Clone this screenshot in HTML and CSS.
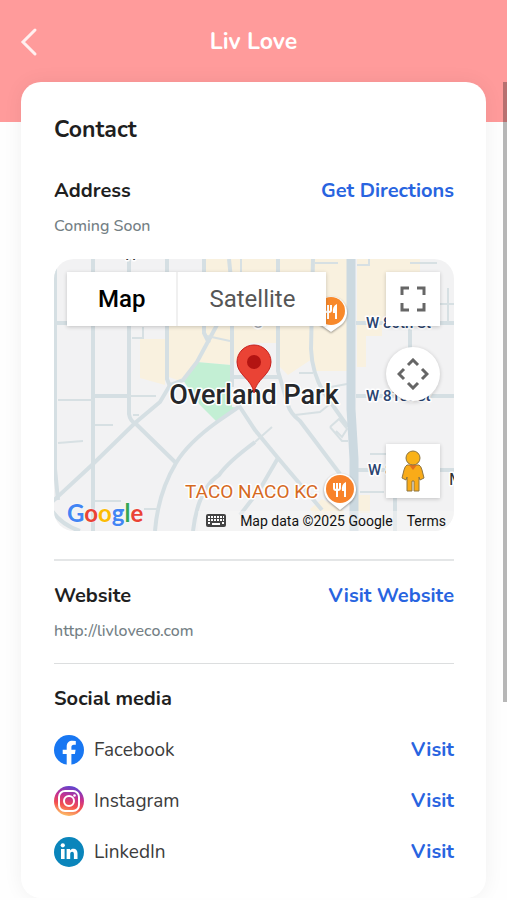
FILE: index.html
```html
<!DOCTYPE html>
<html lang="en">
<head>
  <meta charset="UTF-8" />
  <meta name="viewport" content="width=device-width, initial-scale=1.0" />
  <title>Liv Love</title>
  <link rel="stylesheet" href="styles.css">
</head>
<body>
  <header class="header">
    <button class="back" aria-label="Back">
      <svg width="18" height="30" viewBox="0 0 18 30"><path d="M15 3 L3 15 L15 27" /></svg>
    </button>
    <h1>Liv Love</h1>
  </header>

  <main class="card">
    <h2>Contact</h2>

    <section class="address">
      <div class="row">
        <h3>Address</h3>
        <a href="#">Get Directions</a>
      </div>
      <p>Coming Soon</p>

      <div class="map">
        <svg class="map-tiles" viewBox="0 0 400 272" preserveAspectRatio="xMidYMid slice">
          <rect width="400" height="272" fill="#f2f2f3" />

          <!-- commercial areas and park -->
          <g fill="#f9f1df">
            <path d="M151 0 H293 V112 L262 112 L258 100 L234 116 L224 106 L222 84 L196 84 L178 106 L143 103 L126 122 L115 118 L113 64 L151 64 Z" />
            <path d="M86 80 H111 V126 L86 119 Z" />
            <path d="M303 0 H366 V63 H328 V77 H312 V108 H303 Z" />
            <path d="M256 250 L268 240 L290 252 V261 H262 Z M303 236 H316 V254 H303 Z" />
          </g>
          <path d="M143 103 L177 106 L178 148 L186 149 L163 163 L146 146 L129 121 Z" fill="#c3efd4" />

          <!-- streets -->
          <g fill="none" stroke="#d5dfe3" stroke-width="4">
            <path d="M1 0 V210 L4 241" />
            <path d="M39 0 V272" />
            <path d="M75 0 V155 Q76 162 82 165 L122 204" />
            <path d="M113 0 V120 L118 132" />
            <path d="M-2 243 L39 205 L81 164 L106 143 L116 126 L129 121 L143 103 L164 64" />
            <path d="M150 0 V74 L155 84" />
            <path d="M175 0 L178 30 V128" />
            <path d="M101 272 Q104 234 122 204 Q134 184 163 163 L186 147" />
            <path d="M139 272 Q144 230 165 216 Q174 203 201 183" />
            <path d="M182 142 L201 171 L224 199 L268 251" />
            <path d="M224 0 V112 L234 146 Q236 154 246 162 L286 215" />
            <path d="M259 0 L257 90 Q258 114 270 134 L294 168" />
            <path d="M224 199 L206 230 L186 256" />
            <path d="M302 64 H400 M302 137 H400 M302 211 H400" />
            <path d="M356 64 V95 M341 211 V272" />
            <path d="M39 137 H75 M0 64 H15 M178 118 H226" />
            <path d="M-2 252 Q8 266 26 272" />
          </g>
          <g fill="none" stroke="#d7e0e3" stroke-width="2">
            <path d="M4 141 H39 M75 137 H102 M41 166 H59 M4 184 L29 182 M79 156 H85 M41 242 H67 M90 250 H105" />
            <path d="M78 79 H89 V68 M153 77 L176 82 M187 0 V14" />
            <path d="M201 183 L218 168 M241 156 L266 153 L276 145" />
            <path d="M276 168 L285 160 L293 170 L288 178 L282 172 M276 168 L288 182 H294" />
            <path d="M261 4 H284 M303 6 H315 V0 M356 4 H383 M394 29 V63 M385 45 H400" />
            <path d="M245 114 H259 M266 130 L293 125" />
            <path d="M316 195 H332 M306 233 H330" />
          </g>
          <path d="M297 0 V150 L300 200 V272" fill="none" stroke="#ccd9e0" stroke-width="9" />

          <!-- restaurants -->
          <g class="poi">
            <path d="M277 73 L267 66 A16 16 0 1 1 287 66 Z" fill="#fff" />
            <circle cx="277" cy="52" r="14" fill="#f8892b" />
            <path d="M271 46 V51 Q271 53 273 53 H275 Q277 53 277 51 V46 M274 46 V60" fill="none" stroke="#fff" stroke-width="2" />
            <path d="M283 45 V60 H281 V54 H279 Q278 47 283 45 Z" fill="#fff" />
          </g>
          <g class="poi">
            <path d="M286 251 L276 243 A16 16 0 1 1 296 243 Z" fill="#fff" />
            <circle cx="286" cy="230" r="14" fill="#f8832b" />
            <path d="M280 224 V229 Q280 231 282 231 H284 Q286 231 286 229 V224 M283 224 V238" fill="none" stroke="#fff" stroke-width="2" />
            <path d="M292 223 V238 H290 V232 H288 Q287 225 292 223 Z" fill="#fff" />
          </g>

          <g class="label">
            <text class="street" x="312" y="69">W 80th St</text>
            <text class="street" x="312" y="142">W 81st St</text>
            <text class="street" x="314" y="216">W 82nd St</text>
            <text class="dark" x="395" y="226">M</text>
            <text class="dark" x="69" y="1">W</text>
            <text class="faded" x="199" y="65">g</text>
            <text class="place" x="131" y="239">TACO NACO KC</text>
            <text class="city" x="200" y="145">Overland Park</text>
          </g>

          <!-- marker -->
          <path d="M200 134 C198 120 183 116 183 103 A17 17 0 0 1 217 103 C217 116 202 120 200 134 Z" fill="#ea4335" stroke="#c5221f" />
          <circle cx="200" cy="103" r="7" fill="#b31412" />
        </svg>

        <div class="map-type">
          <button class="active">Map</button>
          <button>Satellite</button>
        </div>
        <button class="map-btn fullscreen" aria-label="Toggle fullscreen view">
          <svg width="26" height="26" viewBox="0 0 26 26" fill="none" stroke="#666" stroke-width="3"><path d="M2 9 V2 H9 M17 2 H24 V9 M24 17 V24 H17 M9 24 H2 V17" /></svg>
        </button>
        <button class="map-btn camera" aria-label="Map camera controls">
          <svg width="32" height="32" viewBox="0 0 32 32" fill="none" stroke="#666" stroke-width="3"><path d="M11 7 L16 2 L21 7 M11 25 L16 30 L21 25 M7 11 L2 16 L7 21 M25 11 L30 16 L25 21" /></svg>
        </button>
        <button class="map-btn pegman" aria-label="Drag Pegman onto the map to open Street View">
          <svg width="26" height="42" viewBox="0 0 26 42" stroke="#8c7440" stroke-width="1">
            <path d="M7 15 H19 Q21 16 22 20 L24 28 L20 30 L19 27 V41 H14 V31 H12 V41 H7 V27 L6 30 L2 28 L4 20 Q5 16 7 15 Z" fill="#f9ab18" />
            <path d="M9 15 H17 L13 20 Z" fill="#e2711d" stroke="none" />
            <circle cx="13" cy="8" r="7" fill="#f9b218" />
          </svg>
        </button>

        <a class="google" href="#"><span class="blue">G</span><span class="red">o</span><span class="yellow">o</span><span class="blue">g</span><span class="green">l</span><span class="red">e</span></a>
        <div class="attribution">
          <button class="keyboard" aria-label="Keyboard shortcuts">
            <svg width="20" height="14" viewBox="0 0 20 14">
              <rect width="20" height="13" rx="2" fill="#444" />
              <path d="M2 3 H18 M2 6 H18 M2 9 H4 M16 9 H18" stroke="#fff" stroke-width="2" stroke-dasharray="2 1" />
              <path d="M6 10 H14" stroke="#fff" stroke-width="2" />
            </svg>
          </button>
          <span>Map data ©2025 Google</span>
          <a href="#">Terms</a>
        </div>
      </div>
    </section>

    <section class="website">
      <div class="row">
        <h3>Website</h3>
        <a href="#">Visit Website</a>
      </div>
      <p>http://livloveco.com</p>
    </section>

    <section class="social">
      <h3>Social media</h3>
      <ul>
        <li class="row">
          <svg width="30" height="30" viewBox="0 0 30 30">
            <circle cx="15" cy="15" r="15" fill="#1877f2" />
            <path d="M12.700 30 V19 H8.700 V14.800 H12.700 V11.500 C12.700 7.700 15 5.700 18.400 5.700 L21.800 6 V9.700 H19.900 C18 9.700 17.400 10.900 17.400 12.100 V14.800 H21.600 L20.900 19 H17.400 V30 Z" fill="#fff" />
          </svg>
          <span>Facebook</span>
          <a href="#">Visit</a>
        </li>
        <li class="row">
          <svg width="30" height="30" viewBox="0 0 30 30">
            <defs>
              <linearGradient id="insta" x1="0.600" y1="0" x2="0.350" y2="1">
                <stop offset="0" stop-color="#5b45d2" />
                <stop offset="0.350" stop-color="#c42f92" />
                <stop offset="0.650" stop-color="#f4504e" />
                <stop offset="1" stop-color="#fdc468" />
              </linearGradient>
            </defs>
            <circle cx="15" cy="15" r="15" fill="url(#insta)" />
            <g fill="none" stroke="#fff" stroke-width="2">
              <rect x="5" y="5" width="20" height="20" rx="6" />
              <circle cx="15" cy="15" r="5" />
            </g>
            <circle cx="20.500" cy="9.500" r="1.300" fill="#fff" />
          </svg>
          <span>Instagram</span>
          <a href="#">Visit</a>
        </li>
        <li class="row">
          <svg width="30" height="30" viewBox="0 0 30 30">
            <circle cx="15" cy="15" r="15" fill="#0a85bb" />
            <g fill="#fff">
              <circle cx="8.800" cy="8.300" r="2.100" />
              <rect x="7" y="12" width="3.600" height="10" />
              <path d="M12.600 12 H16 V13.500 C17.500 11 23.500 10.800 23.500 16.500 V22 H19.900 V17 C19.900 13.800 16.200 14.200 16.200 17 V22 H12.600 Z" />
            </g>
          </svg>
          <span>LinkedIn</span>
          <a href="#">Visit</a>
        </li>
      </ul>
    </section>
  </main>

  <div class="scrollbar"></div>
</body>
</html>
```
FILE: styles.css
```css
* {
  box-sizing: border-box;
}

body {
  margin: 0;
  background: #fefefe;
  color: #1f1f1f;
  font-family: Nunito, Lato, sans-serif;
}

h1, h2, h3, p, ul {
  margin: 0;
  padding: 0;
}

button {
  padding: 0;
  border: none;
  background: none;
  cursor: pointer;
}

svg {
  display: block;
}

.header {
  display: grid;
  grid-template-columns: 40px 1fr 40px;
  align-items: center;
  padding: 27px 20px 65px;
  background: #ff9b9b;
  color: #fff;
}

.header h1 {
  grid-column: 2;
  font-size: 23px;
  line-height: 30px;
  text-align: center;
}

.back path {
  fill: none;
  stroke: #fff;
  stroke-width: 3;
  stroke-linecap: round;
  opacity: 0.85;
}

.card {
  margin: -40px 21px 0;
  padding: 33px 32px 31px 33px;
  border-radius: 20px;
  background: #fff;
  box-shadow: 0 0 20px rgba(0, 0, 0, 0.06);
}

h2 {
  margin-bottom: 32px;
  font-size: 23px;
  font-weight: 700;
  line-height: 30px;
}

h3 {
  font-size: 20px;
  font-weight: 700;
  line-height: 28px;
}

.row {
  display: flex;
  justify-content: space-between;
  align-items: center;
}

.row a {
  color: #2864e0;
  font-size: 20px;
  font-weight: 700;
  line-height: 28px;
  text-decoration: none;
}

.card p {
  margin-top: 10px;
  color: #747f85;
  font-size: 16px;
  font-weight: 500;
  line-height: 22px;
}

.website {
  margin-top: 28px;
  padding: 21px 0;
  border-top: 2px solid #e4e6e7;
  border-bottom: 1px solid #dcdedf;
}

/* map */

.map {
  position: relative;
  height: 272px;
  margin-top: 22px;
  border-radius: 20px;
  overflow: hidden;
  font-family: Roboto, sans-serif;
}

.map-tiles {
  width: 100%;
  height: 100%;
}

.poi {
  filter: drop-shadow(0 1px 1px rgba(0, 0, 0, 0.4));
}

.label text {
  stroke: #fff;
  stroke-width: 3px;
  paint-order: stroke;
  stroke-linejoin: round;
}

.street {
  fill: #2b4470;
  font-size: 15px;
  font-weight: 500;
}

.dark {
  fill: #333;
  font-size: 17px;
}

.faded {
  fill: #a9adb3;
  font-size: 19px;
}

.place {
  fill: #d66a1f;
  font-size: 19px;
}

.city {
  fill: #26282b;
  font-size: 27px;
  font-weight: 500;
  text-anchor: middle;
}

.map-type {
  position: absolute;
  top: 13px;
  left: 13px;
  display: flex;
  background: #fff;
  box-shadow: 0 1px 4px rgba(0, 0, 0, 0.2);
}

.map-type button {
  height: 54px;
  padding: 0 31px;
  color: #565656;
  font-family: inherit;
  font-size: 24px;
}

.map-type .active {
  border-right: 2px solid #f0f0f0;
  color: #000;
  font-weight: 500;
}

.map-btn {
  position: absolute;
  right: 14px;
  display: grid;
  place-items: center;
  width: 54px;
  height: 54px;
  background: #fff;
  box-shadow: 0 1px 4px rgba(0, 0, 0, 0.2);
}

.fullscreen {
  top: 13px;
}

.camera {
  top: 88px;
  border-radius: 50%;
}

.pegman {
  bottom: 33px;
}

.google {
  position: absolute;
  left: 13px;
  bottom: 3px;
  font-family: Lato, sans-serif;
  font-size: 24px;
  font-weight: 700;
  line-height: 30px;
  text-decoration: none;
  text-shadow: 0 0 2px #fff;
}

.blue { color: #4285f4; }
.red { color: #ea4335; }
.yellow { color: #fbbc05; }
.green { color: #34a853; }

.attribution {
  position: absolute;
  right: 0;
  bottom: 0;
  display: flex;
  align-items: center;
  gap: 14px;
  padding: 0 8px;
  background: rgba(245, 245, 245, 0.5);
  color: #111;
  font-size: 14px;
  line-height: 20px;
}

.attribution a {
  color: #111;
  text-decoration: none;
}

/* social links */

.social {
  padding-top: 21px;
}

.social ul {
  display: flex;
  flex-direction: column;
  gap: 21px;
  margin-top: 22px;
  list-style: none;
}

.social li {
  gap: 10px;
  height: 30px;
}

.social span {
  flex: 1;
  color: #3c3c3c;
  font-size: 19px;
}

/* page scroll thumb */

.scrollbar {
  position: absolute;
  top: 82px;
  right: 0;
  width: 4px;
  height: 620px;
  background: rgba(0, 0, 0, 0.28);
}
```
